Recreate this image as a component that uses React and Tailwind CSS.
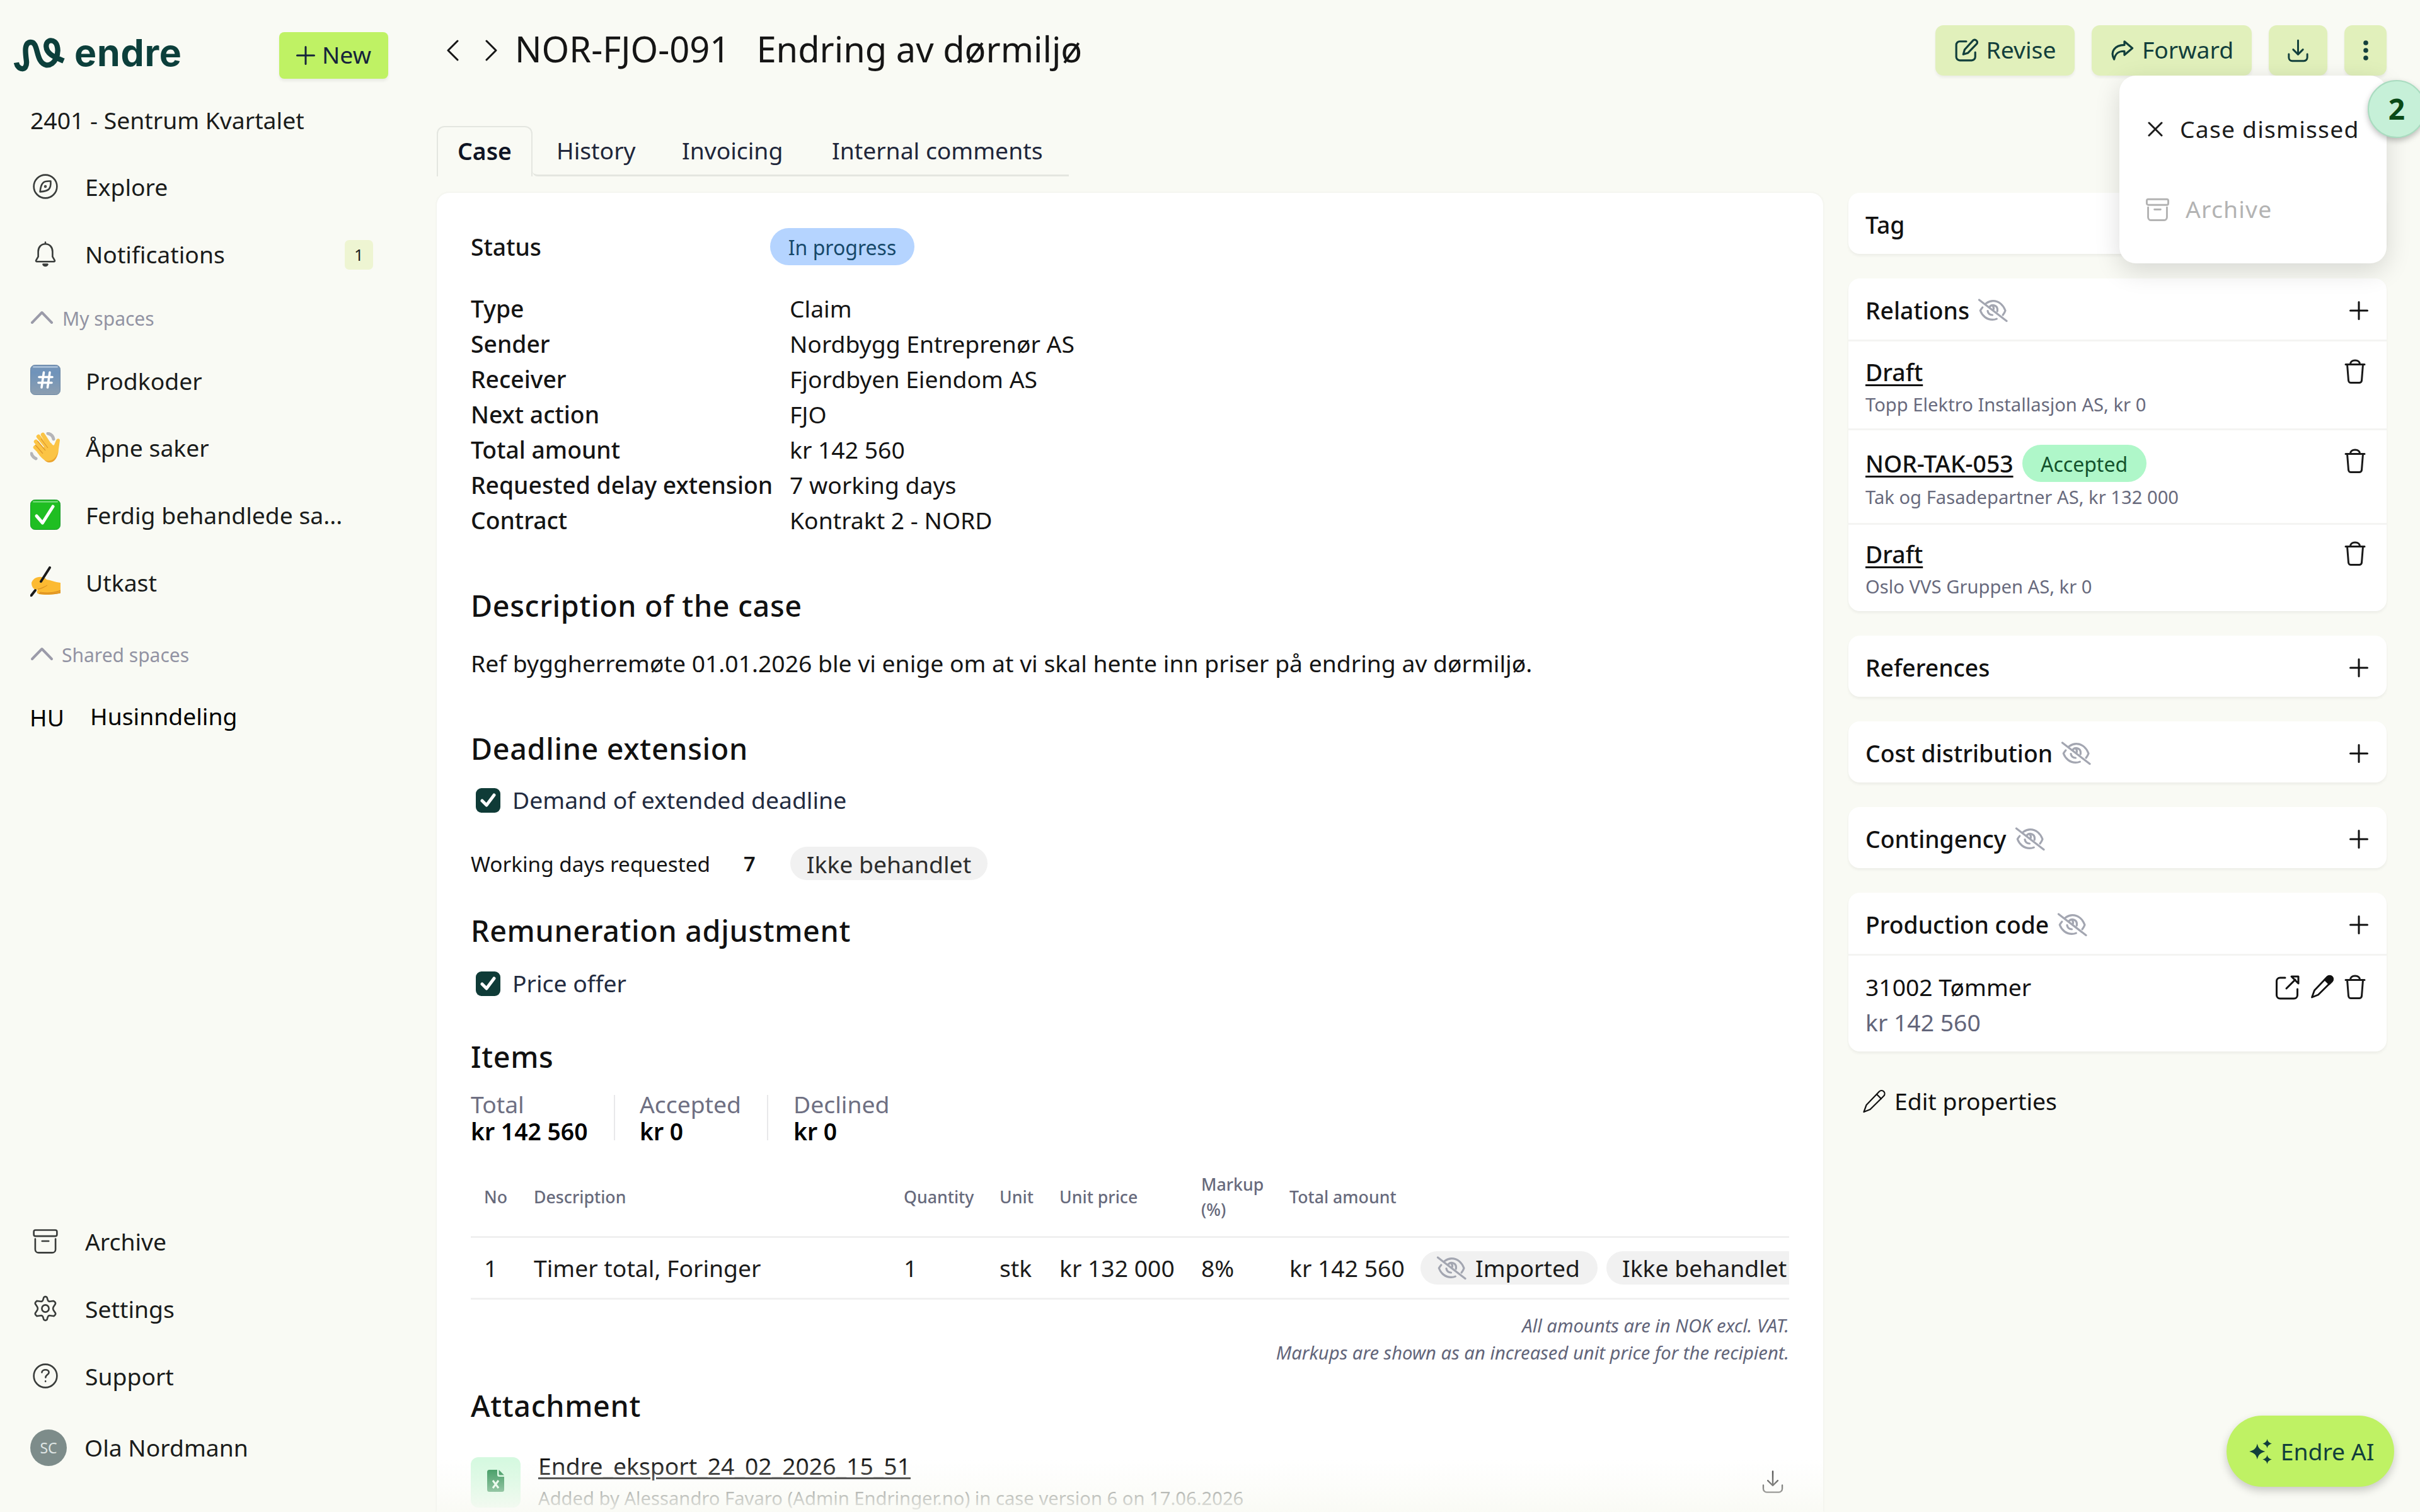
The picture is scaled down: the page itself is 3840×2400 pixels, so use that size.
import React from 'react';
import clsx from 'clsx';

// ---------- Icons ----------

function Icon({ className, width = 1.5, children, viewBox = '0 0 24 24' }) {
  return (
    <svg
      viewBox={viewBox}
      fill="none"
      stroke="currentColor"
      strokeWidth={width}
      strokeLinecap="round"
      strokeLinejoin="round"
      className={clsx('shrink-0', className)}
    >
      {children}
    </svg>
  );
}

const Logo = () => (
  <svg viewBox="60 90 246 168" fill="none" stroke="#0c3f3b" strokeWidth="25" className="h-[56px] w-[82px]">
    <path d="M72 211 C78 248 124 255 120 205 C115 165 107 116 140 114 C180 112 160 212 215 223 C256 226 276 170 266 132 C256 96 212 98 214 135 C216 172 258 186 297 203" />
  </svg>
);

const CompassIcon = ({ className }) => (
  <Icon className={className}>
    <circle cx="12" cy="12" r="10.5" />
    <path d="M16.8 7.2c-3.600-.2-6 .5-7 1.600-1.400 1.400-2.300 4.500-2.600 8 3.600-.3 6.500-.9 8-2.400 1.300-1.400 1.800-4 1.600-7.200z" />
    <circle cx="12" cy="12" r=".5" />
  </Icon>
);

const BellIcon = ({ className }) => (
  <Icon className={className}>
    <path d="M12 1.500v1.500M12 3c-4 0-6.500 3-6.500 7v4.500L3.600 17.800c-.4.700 0 1.200.7 1.200h15.400c.7 0 1.100-.5.7-1.200l-1.900-3.300V10c0-4-2.500-7-6.500-7z" />
    <path d="M10 21.500a2.200 2.200 0 0 0 4 0z" fill="currentColor" />
  </Icon>
);

const ArchiveIcon = ({ className, width = 1.5 }) => (
  <Icon className={className} width={width}>
    <rect x="1.500" y="2" width="21" height="5.500" rx="1.500" />
    <path d="M2.800 10v9.500a3 3 0 0 0 3 3h12.400a3 3 0 0 0 3-3V10M9 12h6" />
  </Icon>
);

const GearIcon = ({ className }) => (
  <Icon className={className}>
    <path d="M10.600 1.800Q12 .6 13.400 1.800L14.200 4.400Q14.800 5.800 16.300 5.600L19.200 5.100Q20.800 5.600 21.200 7.200L20.900 8.200L19.300 10.600Q18.600 12 19.300 13.400L20.900 15.800Q22 17.300 19.600 18.900L16.300 18.400Q14.800 18.200 14.200 19.600L13.400 22.200Q12 23.400 10.600 22.200L9.800 19.600Q9.200 18.200 7.700 18.400L4.400 18.900Q2 17.300 3.100 15.800L4.700 13.400Q5.400 12 4.700 10.600L3.100 8.200Q2 6.700 4.400 5.100L7.700 5.600Q9.200 5.800 9.800 4.400Z" />
    <circle cx="12" cy="12" r="3.200" />
  </Icon>
);

const HelpIcon = ({ className }) => (
  <Icon className={className}>
    <circle cx="12" cy="12" r="10.500" />
    <path d="M8.800 8.800c.3-3.200 6.400-3.100 6.400 0 0 2-3 2.200-3 4.600M12.100 16.800v.2" />
  </Icon>
);

const ChevronUp = () => (
  <Icon className="mt-[-4px] h-[22px] w-[38px] text-[#9b9ba9]" viewBox="0 0 38 22" width={4}>
    <path d="M3 19 18.500 3 34 19" />
  </Icon>
);

const EyeOffIcon = ({ className }) => (
  <Icon className={clsx('h-[38px] w-[48px] text-[#a3a6b1]', className)} viewBox="0 0 48 38" width={3.2}>
    <path d="M2.500 2 46 35.500" />
    <path d="M13.500 7.500C17 5 20.500 3.600 24.500 3.600 34 3.600 41 10.500 44 19c-.9 2.600-2.200 4.900-3.900 7M7.800 14C6.200 15.800 5 17.500 4.300 19 7.500 27.500 14.500 33.400 23.500 33.400c2.400 0 4.700-.4 6.800-1.300" />
    <path d="M19.500 12.500c4-4 12-1.500 12 5.200 0 .8-.1 1.700-.3 2.500M24.500 12.500c1.500 1.800 1.200 3.500.5 5M16 19.500c.5 4 3.500 6.500 7.500 6.500" />
  </Icon>
);

const TrashIcon = () => (
  <Icon className="h-[40px] w-[34px] text-[#1a1a1a]" viewBox="0 0 34 40" width={3}>
    <path d="M2 8.500h30M4.500 8.500l2 25.500a4 4 0 0 0 4 3.600h13a4 4 0 0 0 4-3.600l2-25.500M9.500 8c0-3.500 3-6 7.500-6s7.500 2.500 7.500 6" />
  </Icon>
);

const PlusIcon = ({ className }) => (
  <Icon className={className} viewBox="0 0 30 30" width={3}>
    <path d="M15 1.500v27M1.500 15h27" />
  </Icon>
);

const DownloadIcon = ({ className, width = 1.900 }) => (
  <Icon className={className} width={width}>
    <path d="M12 1.500v14M7 10.800l5 5 5-5M2.500 15.500v3.500a3.500 3.500 0 0 0 3.500 3.500h12a3.500 3.500 0 0 0 3.500-3.500v-3.500" />
  </Icon>
);

const ReviseIcon = () => (
  <Icon className="h-[38px] w-[38px]" width={2}>
    <path d="M12 3H5.500a3.500 3.500 0 0 0-3.500 3.500v12A3.500 3.500 0 0 0 5.500 22h12a3.500 3.500 0 0 0 3.500-3.500V14" />
    <path d="M19 1.800a2.600 2.600 0 0 1 3.500 3.700l-8.700 9-4.800 1.500 1.400-4.800z" />
  </Icon>
);

const ForwardIcon = () => (
  <Icon className="h-[38px] w-[38px]" width={2}>
    <path d="M14.500 3 22.500 9.800 14.500 16.600V12.800C9 12.600 5.500 14.500 4.200 21 C0 13.500 4.500 6.800 14.500 6.600z" />
  </Icon>
);

const ExternalIcon = () => (
  <Icon className="h-[40px] w-[40px]" viewBox="0 0 40 40" width={3}>
    <path d="M16 5H8a5.500 5.500 0 0 0-5.500 5.500v22A5.500 5.500 0 0 0 8 38h22a5.500 5.500 0 0 0 5.500-5.500V23M18 22 32 8M26 3h11v11z" />
  </Icon>
);

const PencilIcon = ({ filled, className }) => (
  <Icon className={clsx('h-[38px] w-[38px]', className)} viewBox="0 0 38 38" width={filled ? 2.8 : 2.2}>
    <path d="M27 3.500a5 5 0 0 1 7 7.200L12.500 32 2.500 36 6.500 25z" />
    {filled ? <path d="M23 8 27.500 3.500a5 5 0 0 1 7 7L30 15z" fill="currentColor" /> : <path d="M23 8l7 7" />}
  </Icon>
);

// ---------- Space emojis ----------

const HashEmoji = () => (
  <svg viewBox="0 0 48 48" className="mt-[-3px] h-[48px] w-[48px]">
    <defs>
      <linearGradient id="hash" x1="0" y1="0" x2="0" y2="1">
        <stop offset="0" stopColor="#7896b8" />
        <stop offset=".25" stopColor="#6f93ba" />
        <stop offset="1" stopColor="#8c9eb0" />
      </linearGradient>
    </defs>
    <rect x=".5" y=".5" width="47" height="47" rx="7" fill="url(#hash)" stroke="#6b87a5" />
    <path d="M5 3.500h38" stroke="#b9cde2" strokeWidth="2" strokeLinecap="round" />
    <path d="M21.500 12 18 36M31 12l-3.500 24M14 19.500h21M13 28.500h21" stroke="#fff" strokeWidth="3.600" strokeLinecap="round" />
  </svg>
);

const WaveEmoji = () => (
  <svg viewBox="0 0 48 48" className="mt-[-3px] h-[48px] w-[48px]">
    <path d="M28 2c5 1 8 4 9 9M2 34c1 4 3 6 7 8" stroke="#b5b5b8" strokeWidth="5" fill="none" strokeLinecap="round" />
    <g stroke="#fbc445" strokeWidth="6.500" strokeLinecap="round">
      <path d="M9 15 24 33M13 7 29 27M20 4 33 24M8 24l14 14" />
    </g>
    <path d="M14 28 33 17c2 3 4 5 5 3l3-7c2-4 6-3 6 0l-2 14c0 12-7 20-15 20-8-1-14-8-19-15z" fill="#fbc445" />
    <path d="M11.500 14 24 29M17 10.500 28 25M8 20l12 14" stroke="#dd962b" strokeWidth="1.200" />
    <path d="M22 44c10 5 20-2 22-14-1 12-6 18-14 18-3 0-6-2-8-4z" fill="#eba32c" />
  </svg>
);

const CheckEmoji = () => (
  <svg viewBox="0 0 48 48" className="mt-[-3px] h-[48px] w-[48px]">
    <rect x=".5" y=".5" width="47" height="47" rx="7" fill="#1fbe22" stroke="#179a26" />
    <path d="M5 3.500h38" stroke="#84dd87" strokeWidth="2" strokeLinecap="round" />
    <path d="M10 26 19.500 37 36 11" stroke="#fff" strokeWidth="5" fill="none" strokeLinecap="round" strokeLinejoin="round" />
  </svg>
);

const WriteEmoji = () => (
  <svg viewBox="0 0 48 48" className="mt-[-3px] h-[48px] w-[48px]">
    <path d="M2 26c2-6 8-10 16-9 4 0 6 2 8 4 7 1 13 4 22 5v16c-8 3-24 4-34 2-4-1-4-4-2-7-6 1-10-4-10-11z" fill="#fcba32" />
    <path d="M12 36c5 0 10-3 15-6M14 43c10 2 26 1 34-1v-4c-10 4-22 5-32 3z" stroke="#d98d1f" strokeWidth="1" fill="#e99f27" />
    <path d="M31 2 17 24M8 38 1 47" stroke="#1b1b1b" strokeWidth="4" strokeLinecap="round" />
  </svg>
);

// ---------- Sidebar ----------

const spaces = [
  { label: 'Prodkoder', emoji: HashEmoji },
  { label: 'Åpne saker', emoji: WaveEmoji },
  { label: 'Ferdig behandlede sa...', emoji: CheckEmoji },
  { label: 'Utkast', emoji: WriteEmoji },
];

function NavRow({ icon: IconComp, label, badge }) {
  return (
    <div className="flex h-[106.700px] shrink-0 items-center pl-[51px] pr-[101px]">
      <IconComp className="mt-[-2px] h-[42px] w-[42px] text-[#3a3d3b]" />
      <span className="ml-[42px]">{label}</span>
      {badge && (
        <span className="ml-auto flex h-[47px] w-[45px] items-center justify-center rounded-[7px] bg-[#eef5d2] text-[26px]">{badge}</span>
      )}
    </div>
  );
}

function Sidebar() {
  return (
    <aside className="flex h-[2400px] w-[693px] shrink-0 flex-col">
      <div className="flex h-[137px] items-start pl-[22px] pt-[51px]">
        <div className="mt-[8px]">
          <Logo />
        </div>
        <span className="ml-[14px] mt-[-2px] font-['Inter'] text-[59px] font-bold leading-[70px] tracking-[0.800px] text-[#0c3f3b]">endre</span>
        <button className="ml-auto mr-[77px] flex h-[74px] w-[173px] items-center justify-center gap-[11px] rounded-[8px] bg-[#bff264] text-[#16233b] shadow-[0_4px_4px_rgba(0,0,0,0.06)]">
          <PlusIcon className="h-[30px] w-[30px]" />
          <span className="mt-[-2px]">New</span>
        </button>
      </div>
      <div className="flex h-[107px] items-center pl-[48px]">2401 - Sentrum Kvartalet</div>
      <NavRow icon={CompassIcon} label="Explore" />
      <NavRow icon={BellIcon} label="Notifications" badge="1" />
      <div className="flex h-[94px] items-center gap-[13px] pl-[48px] pt-[4px] text-[30px] text-[#9293a3]">
        <ChevronUp />
        My spaces
      </div>
      {spaces.map(({ label, emoji: Emoji }) => (
        <div key={label} className="flex h-[106.700px] items-center gap-[40px] pl-[48px]">
          <Emoji />
          {label}
        </div>
      ))}
      <div className="flex h-[120px] items-center gap-[12px] pl-[48px] pt-[4px] text-[30px] text-[#9293a3]">
        <ChevronUp />
        Shared spaces
      </div>
      <div className="flex h-[77px] items-center pl-[47px] text-black">
        <span className="mt-[4px] w-[96px]">HU</span>
        <span>Husinndeling</span>
      </div>
      <div className="mt-auto mb-[43px]">
        <NavRow icon={ArchiveIcon} label="Archive" />
        <NavRow icon={GearIcon} label="Settings" />
        <NavRow icon={HelpIcon} label="Support" />
        <div className="flex h-[119px] items-center pl-[48px]">
          <span className="flex h-[58px] w-[58px] items-center justify-center rounded-full bg-[#7d8c8a] text-[23px] text-[#dfe5e4]">SC</span>
          <span className="ml-[28px]">Ola Nordmann</span>
        </div>
      </div>
    </aside>
  );
}

// ---------- Header ----------

const actionClass =
  'flex h-[80px] items-center justify-center rounded-[13px] bg-[#e1f0bb] text-[#123f3c] shadow-[0_3px_4px_rgba(0,0,0,0.06)]';

function Header() {
  return (
    <header className="relative z-20 flex h-[200px] justify-between pt-[40px]">
      <div className="flex h-[80px] items-center pl-[14px] text-[#151515]">
        <Icon className="h-[34px] w-[22px]" viewBox="0 0 22 34" width={3}>
          <path d="M19 2 4 17l15 15" />
        </Icon>
        <Icon className="ml-[40px] h-[34px] w-[22px]" viewBox="0 0 22 34" width={3}>
          <path d="M3 2l15 15L3 32" />
        </Icon>
        <h1 className="ml-[26px] mt-[-6px] whitespace-pre text-[56px] leading-[76px]">NOR-FJO-091</h1>
        <h1 className="ml-[42px] mt-[-6px] whitespace-pre text-[56px] leading-[76px]">Endring av dørmiljø</h1>
      </div>
      <div className="relative flex h-[80px] gap-[27px]">
        <button className={clsx(actionClass, 'w-[221px] gap-[13px]')}>
          <ReviseIcon />
          <span className="mt-[-2px]">Revise</span>
        </button>
        <button className={clsx(actionClass, 'w-[254px] gap-[13px]')}>
          <ForwardIcon />
          <span className="mt-[-2px]">Forward</span>
        </button>
        <button className={clsx(actionClass, 'w-[93px]')}>
          <DownloadIcon className="h-[37px] w-[37px]" />
        </button>
        <button className={clsx(actionClass, 'w-[67px]')}>
          <svg viewBox="0 0 8 32" fill="currentColor" className="h-[32px] w-[8px]">
            <circle cx="4" cy="4" r="3.800" />
            <circle cx="4" cy="16" r="3.800" />
            <circle cx="4" cy="28" r="3.800" />
          </svg>
        </button>

        {/* Case menu */}
        <div className="absolute right-0 top-[80px] flex h-[298px] w-[424px] flex-col rounded-[26px] bg-white pt-[21px] tracking-[1.200px] shadow-[0_12px_40px_rgba(0,0,0,0.14)]">
          <div className="flex h-[128px] items-center pl-[45px] text-[#1c1c1c]">
            <Icon className="h-[24px] w-[24px]" viewBox="0 0 24 24" width={3}>
              <path d="M2 2l20 20M22 2 2 22" />
            </Icon>
            <span className="ml-[27px] whitespace-nowrap">Case dismissed</span>
          </div>
          <div className="flex h-[128px] items-center pl-[41px] text-[#b3b3b3]">
            <ArchiveIcon className="mt-[-2px] h-[39px] w-[39px]" width={1.800} />
            <span className="ml-[25px] mt-[-2px]">Archive</span>
          </div>
        </div>
        <span className="absolute right-[-62px] top-[87px] flex h-[92px] w-[92px] items-center justify-center rounded-full border-2 border-[#a9dcc0] bg-[#c6f0d8] pb-[3px] text-[46px] font-bold text-[#0a4a17] shadow-[0_4px_10px_rgba(0,0,0,0.25)]">
          2
        </span>
      </div>
    </header>
  );
}

function Tabs() {
  return (
    <nav className="flex h-[80px] w-[1003px] text-[#20263a]">
      <span className="flex w-[152px] items-center justify-center rounded-t-[12px] border-x-2 border-t-2 border-[#e4e6e0] pb-[3px] font-semibold text-[#0f1424]">Case</span>
      <span className="flex flex-1 items-center rounded-bl-[8px] border-b-[3px] border-[#e4e6e0] pl-[38px]">
        <span className="w-[199px]">History</span>
        <span className="w-[238px]">Invoicing</span>
        <span className="whitespace-nowrap">Internal comments</span>
      </span>
    </nav>
  );
}

// ---------- Case card ----------

const details = [
  ['Type', 'Claim'],
  ['Sender', 'Nordbygg Entreprenør AS'],
  ['Receiver', 'Fjordbyen Eiendom AS'],
  ['Next action', 'FJO'],
  ['Total amount', 'kr 142 560'],
  ['Requested delay extension', '7 working days'],
  ['Contract', 'Kontrakt 2 - NORD'],
];

const totals = [
  { label: 'Total', value: 'kr 142 560', className: 'w-[227px]' },
  { label: 'Accepted', value: 'kr 0', className: 'w-[243px] border-l-2 pl-[39px]' },
  { label: 'Declined', value: 'kr 0', className: 'border-l-2 pl-[40px]' },
];

function SectionTitle({ className, children }) {
  return <h2 className={clsx('text-[46.700px] font-medium leading-[60px] tracking-[0.650px] text-[#111]', className)}>{children}</h2>;
}

function CheckRow({ className, children }) {
  return (
    <div className={clsx('flex h-[56px] items-center pl-[8px] text-[#222b40]', className)}>
      <span className="flex h-[39px] w-[39px] items-center justify-center rounded-[9px] bg-[#0f3b37]">
        <Icon className="h-[26px] w-[28px] text-white" viewBox="0 0 28 26" width={5}>
          <path d="M4 14l7 7L23 5" />
        </Icon>
      </span>
      <span className="ml-[19px]">{children}</span>
    </div>
  );
}

const gridCols = 'grid grid-cols-[100px_587px_152px_95px_225px_140px_1fr]';

function ItemsTable() {
  return (
    <div className="mt-[16px] overflow-hidden">
      <div className={clsx(gridCols, 'h-[129px] items-center border-b-[3px] border-[#f0f0f0] pt-[2px] text-[26.700px] font-medium leading-[40px] text-[#676a7c]')}>
        <span className="pl-[21px]">No</span>
        <span>Description</span>
        <span>Quantity</span>
        <span>Unit</span>
        <span>Unit price</span>
        <span className="w-[100px]">Markup (%)</span>
        <span>Total amount</span>
      </div>
      <div className={clsx(gridCols, 'h-[98px] items-center border-b-[3px] border-[#f0f0f0] text-[#1b1b1b]')}>
        <span className="pl-[21px]">1</span>
        <span>Timer total, Foringer</span>
        <span>1</span>
        <span>stk</span>
        <span className="whitespace-nowrap">kr 132 000</span>
        <span>8%</span>
        <span className="flex items-center whitespace-nowrap">
          <span className="w-[208px] shrink-0">kr 142 560</span>
          <span className="flex h-[53px] w-[281px] shrink-0 items-center rounded-full bg-[#f1f1f1] pl-[25px]">
            <EyeOffIcon />
            <span className="ml-[14px]">Imported</span>
          </span>
          <span className="ml-[14px] flex h-[53px] w-[313px] shrink-0 items-center rounded-full bg-[#f1f1f1] pl-[25px]">Ikke behandlet</span>
        </span>
      </div>
    </div>
  );
}

function CaseCard() {
  return (
    <section className="relative h-[2094px] w-[2200px] overflow-hidden rounded-t-[20px] bg-white px-[54px] text-[#141414] shadow-[0_0_4px_rgba(0,0,0,0.06)]">
      <div className="mt-[56px] flex h-[59px] items-center">
        <span className="w-[475px] font-medium">Status</span>
        <span className="flex h-[59px] w-[229px] items-center justify-center rounded-full bg-[#b5d4ff] pt-[2px] text-[32px] text-[#17496b]">In progress</span>
      </div>
      <div className="mt-[41px]">
        {details.map(([label, value]) => (
          <div key={label} className="flex h-[56px] items-center">
            <span className="w-[506px] whitespace-nowrap font-medium">{label}</span>
            <span>{value}</span>
          </div>
        ))}
      </div>

      <SectionTitle className="mt-[77px]">Description of the case</SectionTitle>
      <p className="mt-[34px] leading-[56px]">Ref byggherremøte 01.01.2026 ble vi enige om at vi skal hente inn priser på endring av dørmiljø.</p>

      <SectionTitle className="mt-[77px]">Deadline extension</SectionTitle>
      <CheckRow className="mt-[24px]">Demand of extended deadline</CheckRow>
      <div className="mt-[46px] flex h-[53px] items-center">
        <span className="w-[433px] text-[33.300px]">Working days requested</span>
        <span className="w-[74px] text-[32.700px] font-semibold">7</span>
        <span className="flex h-[53px] w-[313px] items-center justify-center rounded-full bg-[#f1f1f1] pt-[2px] text-[#2c2c2c]">Ikke behandlet</span>
      </div>

      <SectionTitle className="mt-[50px]">Remuneration adjustment</SectionTitle>
      <CheckRow className="mt-[26px]">Price offer</CheckRow>

      <SectionTitle className="mt-[58px]">Items</SectionTitle>
      <div className="mt-[31px] flex h-[82px] items-start leading-[43px]">
        {totals.map((t) => (
          <div key={t.label} className={clsx('flex h-[72px] flex-col justify-center whitespace-nowrap border-[#e8e8ea]', t.className)}>
            <span className="text-[#6e6f82]">{t.label}</span>
            <span className="font-semibold text-black">{t.value}</span>
          </div>
        ))}
      </div>
      <ItemsTable />
      <div className="mt-[20px] text-right text-[29.200px] italic leading-[42.500px] text-[#62657a]">
        <p>All amounts are in NOK excl. VAT.</p>
        <p>Markups are shown as an increased unit price for the recipient.</p>
      </div>

      <SectionTitle className="mt-[33px]">Attachment</SectionTitle>
      <div className="mt-[52px] flex h-[80px] items-center">
        <span className="flex h-[80px] w-[79px] items-center justify-center rounded-[12px] bg-[#d5f9e0]">
          <svg viewBox="0 0 27 35" className="mt-[-5px] h-[35px] w-[27px]">
            <path d="M3.500 0H16v8a3 3 0 0 0 3 3h8v20.500a3.500 3.500 0 0 1-3.500 3.500h-20A3.500 3.500 0 0 1 0 31.500v-28A3.500 3.500 0 0 1 3.500 0z" fill="#2a8f50" />
            <path d="M18.500 0 27 8.500h-7a1.500 1.500 0 0 1-1.500-1.500z" fill="#2a8f50" />
            <path d="M9 17l9 12M18 17 9 29" stroke="#e4fbeb" strokeWidth="3" />
          </svg>
        </span>
        <div className="ml-[28px] flex flex-col whitespace-nowrap">
          <span className="leading-[50px] underline decoration-[3px] underline-offset-[4px]">Endre_eksport_24_02_2026_15_51</span>
          <span className="text-[29.200px] leading-[52px] text-[#6e7270]">Added by Alessandro Favaro (Admin Endringer.no) in case version 6 on 17.06.2026</span>
        </div>
        <DownloadIcon className="ml-auto mr-[7px] mt-[-3px] h-[38px] w-[38px] text-[#333]" width={1.500} />
      </div>

      {/* Fade towards the bottom edge */}
      <div className="absolute inset-x-0 bottom-0 h-[84px] bg-gradient-to-b from-[#f9faf4]/0 via-[#f9faf4]/40 to-[#f9faf4]/90" />
    </section>
  );
}

// ---------- Properties column ----------

const cardClass = 'flex w-full flex-col rounded-[18px] bg-white shadow-[0_3px_4px_rgba(0,0,0,0.05)]';

function PropertyHeader({ title, hidden, add = true }) {
  return (
    <div className="flex h-[97px] shrink-0 items-center pl-[27px] pr-[29px] pt-[4px] font-medium">
      <span>{title}</span>
      {hidden && <EyeOffIcon className="ml-[13px]" />}
      {add && <PlusIcon className="ml-auto h-[30px] w-[30px]" />}
    </div>
  );
}

const relations = [
  { title: 'Draft', sub: 'Topp Elektro Installasjon AS, kr 0', className: 'h-[141px] pt-[22px]' },
  { title: 'NOR-TAK-053', sub: 'Tak og Fasadepartner AS, kr 132 000', accepted: true, className: 'h-[150px] pt-[23px]' },
  { title: 'Draft', sub: 'Oslo VVS Gruppen AS, kr 0', className: 'h-[140px] pt-[20px]' },
];

function Properties() {
  return (
    <aside className="flex w-[854px] flex-col gap-[39px] text-[#111]">
      <div className={cardClass}>
        <PropertyHeader title="Tag" add={false} />
      </div>
      <div className={cardClass}>
        <PropertyHeader title="Relations" hidden />
        {relations.map((r) => (
          <div key={r.sub} className={clsx('flex items-start justify-between border-t-[3px] border-[#f4f4f2] pl-[27px] pr-[33px]', r.className)}>
            <div className="flex flex-col">
              <div className={clsx('flex items-center', r.accepted ? 'h-[59px]' : 'h-[54px]')}>
                <span className="font-medium underline decoration-[3px] underline-offset-[5px]">{r.title}</span>
                {r.accepted && (
                  <span className="ml-[14px] flex h-[59px] w-[197px] items-center justify-center rounded-full bg-[#aff7c9] pt-[2px] text-[32px] text-[#14532d]">Accepted</span>
                )}
              </div>
              <span className="text-[29.200px] leading-[49px] text-[#686a7d]">{r.sub}</span>
            </div>
            <div className="mt-[6px]">
              <TrashIcon />
            </div>
          </div>
        ))}
      </div>
      <div className={cardClass}>
        <PropertyHeader title="References" />
      </div>
      <div className={cardClass}>
        <PropertyHeader title="Cost distribution" hidden />
      </div>
      <div className={cardClass}>
        <PropertyHeader title="Contingency" hidden />
      </div>
      <div className={cardClass}>
        <PropertyHeader title="Production code" hidden />
        <div className="flex h-[155px] items-start justify-between border-t-[3px] border-[#f4f4f2] pl-[27px] pr-[33px] pt-[22px] leading-[56px]">
          <div className="flex flex-col">
            <span>31002 Tømmer</span>
            <span className="text-[#62657a]">kr 142 560</span>
          </div>
          <div className="mt-[8px] flex gap-[16px]">
            <ExternalIcon />
            <PencilIcon filled />
            <TrashIcon />
          </div>
        </div>
      </div>
      <div className="mt-[12px] flex h-[56px] items-center gap-[13px] pl-[22px]">
        <PencilIcon />
        Edit properties
      </div>
    </aside>
  );
}

// ---------- Page ----------

export default function App() {
  return (
    <div className="relative flex h-[2400px] w-[3840px] overflow-hidden bg-[#f9faf4] font-['Noto_Sans',sans-serif] text-[37.300px] leading-[56px] text-[#1a1c1b]">
      <Sidebar />
      <main className="w-[3094px] shrink-0">
        <Header />
        <Tabs />
        <div className="mt-[26px] flex items-start gap-[40px]">
          <CaseCard />
          <Properties />
        </div>
      </main>

      {/* Floating assistant button */}
      <button className="absolute bottom-[40px] right-[41px] flex h-[113px] w-[266px] items-center justify-center gap-[12px] rounded-full bg-[#bff264] text-[#123f3c] shadow-[0_6px_14px_rgba(0,0,0,0.2)]">
        <svg viewBox="0 0 40 40" fill="currentColor" className="h-[42px] w-[42px]">
          <path d="M16 8c1.600 7 4 9.500 12 12-8 2.500-10.400 5-12 12-1.600-7-4-9.500-12-12 8-2.500 10.400-5 12-12zM31 1c.8 4 2.500 5.500 7 7-4.500 1.500-6.200 3-7 7-.8-4-2.500-5.500-7-7 4.500-1.500 6.200-3 7-7zM31 25c.8 4 2.500 5.500 7 7-4.500 1.500-6.200 3-7 7-.8-4-2.500-5.500-7-7 4.500-1.500 6.200-3 7-7z" />
        </svg>
        Endre AI
      </button>
    </div>
  );
}
